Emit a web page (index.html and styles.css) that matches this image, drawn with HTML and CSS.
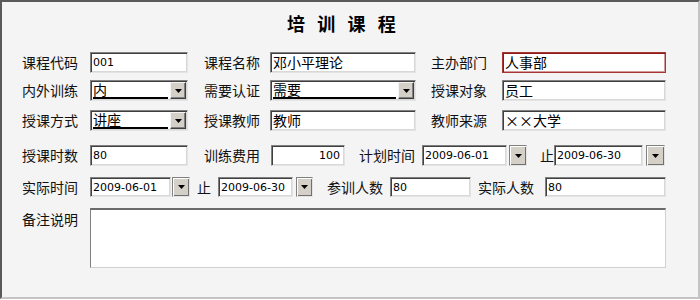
FILE: index.html
```html
<!DOCTYPE html>
<html lang="zh-CN">
<head>
<meta charset="utf-8">
<title>培训课程</title>
<link rel="stylesheet" href="styles.css">
</head>
<body>
<div class="frame">
  <div class="title">培 训 课 程</div>

  <div class="row r1">
    <span class="lbl w68">课程代码</span>
    <div class="field w98"><span class="num">001</span></div>
    <span class="lbl ml16 w66">课程名称</span>
    <div class="field w146"><span class="cjk">邓小平理论</span></div>
    <span class="lbl ml15 w71">主办部门</span>
    <div class="field red w164"><span class="cjk">人事部</span></div>
  </div>

  <div class="row r2">
    <span class="lbl w68">内外训练</span>
    <div class="field select w98"><span class="sel-text">内</span><span class="drop"><svg width="7" height="4" viewBox="0 0 7 4"><polygon points="0,0 7,0 3.5,4" fill="#000"/></svg></span></div>
    <span class="lbl ml16 w66">需要认证</span>
    <div class="field select w146"><span class="sel-text">需要</span><span class="drop"><svg width="7" height="4" viewBox="0 0 7 4"><polygon points="0,0 7,0 3.5,4" fill="#000"/></svg></span></div>
    <span class="lbl ml15 w71">授课对象</span>
    <div class="field w164"><span class="cjk">员工</span></div>
  </div>

  <div class="row r3">
    <span class="lbl w68">授课方式</span>
    <div class="field select w98"><span class="sel-text">讲座</span><span class="drop"><svg width="7" height="4" viewBox="0 0 7 4"><polygon points="0,0 7,0 3.5,4" fill="#000"/></svg></span></div>
    <span class="lbl ml16 w66">授课教师</span>
    <div class="field w146"><span class="cjk">教师</span></div>
    <span class="lbl ml15 w71">教师来源</span>
    <div class="field w164"><span class="cjk">××大学</span></div>
  </div>

  <div class="row r4">
    <span class="lbl w68">授课时数</span>
    <div class="field w98"><span class="num">80</span></div>
    <span class="lbl ml16 w67">训练费用</span>
    <div class="field right w74"><span class="num">100</span></div>
    <span class="lbl ml14 w63">计划时间</span>
    <div class="field w85"><span class="num">2009-06-01</span></div>
    <span class="dbtn ml2 w18"><svg width="7" height="4" viewBox="0 0 7 4"><polygon points="0,0 7,0 3.5,4" fill="#000"/></svg></span>
    <span class="lbl ml13 w14">止</span>
    <div class="field w89"><span class="num">2009-06-30</span></div>
    <span class="dbtn ml3 w19"><svg width="7" height="4" viewBox="0 0 7 4"><polygon points="0,0 7,0 3.5,4" fill="#000"/></svg></span>
  </div>

  <div class="row r5">
    <span class="lbl w68">实际时间</span>
    <div class="field w81"><span class="num">2009-06-01</span></div>
    <span class="dbtn ml1 w18"><svg width="7" height="4" viewBox="0 0 7 4"><polygon points="0,0 7,0 3.5,4" fill="#000"/></svg></span>
    <span class="lbl ml7 w21">止</span>
    <div class="field w75"><span class="num">2009-06-30</span></div>
    <span class="dbtn ml3 w17"><svg width="7" height="4" viewBox="0 0 7 4"><polygon points="0,0 7,0 3.5,4" fill="#000"/></svg></span>
    <span class="lbl ml14 w63">参训人数</span>
    <div class="field w81"><span class="num">80</span></div>
    <span class="lbl ml7 w67">实际人数</span>
    <div class="field w121"><span class="num">80</span></div>
  </div>

  <div class="row r6">
    <span class="lbl w68 top">备注说明</span>
    <div class="field memo"></div>
  </div>
</div>
</body>
</html>
```

FILE: styles.css
```css
html, body {
  margin: 0;
  padding: 0;
  background: #ffffff;
}
.frame {
  box-sizing: border-box;
  width: 700px;
  height: 299px;
  background: #f4f4f4;
  border-top: 2px solid #5a5a5a;
  border-left: 2px solid #5a5a5a;
  border-right: 2px solid #c4c4c4;
  border-bottom: 2px solid #c4c4c4;
  padding: 11px 0 0 20px;
  font-family: "Noto Sans CJK SC", sans-serif;
  color: #111;
}
.title {
  height: 24px;
  line-height: 24px;
  padding-left: 265px;
  font-family: "DejaVu Sans", "Noto Sans CJK SC", sans-serif;
  font-size: 18px;
  font-weight: bold;
  word-spacing: 6px;
  color: #000;
}
.row {
  display: flex;
  align-items: center;
  height: 21px;
}
.r1 { margin-top: 15px; }
.r2 { margin-top: 7px; }
.r3 { margin-top: 9px; }
.r4 { margin-top: 14px; }
.r5 { margin-top: 11px; height: 20px; }
.r6 { margin-top: 11px; height: 60px; align-items: flex-start; }

.lbl {
  flex: none;
  font-size: 14px;
  line-height: 21px;
  white-space: nowrap;
}
.lbl.top { line-height: 20px; margin-top: 1px; }

.field {
  box-sizing: border-box;
  flex: none;
  height: 100%;
  background: #fff;
  border: 1px solid;
  border-color: #808080 #e4e4e4 #e4e4e4 #808080;
  box-shadow: inset 1px 1px 0 #404040, inset -1px -1px 0 #d8d8d8;
  display: flex;
  align-items: center;
  padding: 0 2px 0 2px;
  overflow: hidden;
}
.field.red {
  border-color: #a83434;
  box-shadow: inset 1px 1px 0 #8a1c1c, inset -1px -1px 0 #d49a9a;
}
.field.right { justify-content: flex-end; padding-right: 4px; }
.num {
  font-family: "DejaVu Sans", sans-serif;
  font-size: 11px;
  color: #000;
  white-space: nowrap;
}
.cjk {
  font-family: "Noto Sans CJK SC", sans-serif;
  font-size: 14px;
  line-height: 17px;
  color: #000;
  white-space: nowrap;
}
.select {
  padding: 1px 1px 1px 2px;
  align-items: stretch;
}
.sel-text {
  flex: 1;
  font-size: 14px;
  line-height: 15px;
  color: #000;
  border-bottom: 2px solid #000;
  margin-right: 2px;
  white-space: nowrap;
}
.drop, .dbtn {
  box-sizing: border-box;
  flex: none;
  display: flex;
  align-items: center;
  justify-content: center;
  background: #d4d0c8;
}
.drop {
  width: 16px;
  border: 1px solid;
  border-color: #f4f4f4 #404040 #404040 #f4f4f4;
  box-shadow: inset -1px -1px 0 #808080;
}
.dbtn {
  height: 100%;
  border: 1px solid;
  border-color: #808080 #e4e4e4 #e4e4e4 #808080;
  box-shadow: inset 1px 1px 0 #ffffff, inset -1px -1px 0 #707070;
}
.memo {
  width: 576px;
  height: 60px;
  border-top: 2px solid #6a6a6a;
  border-left: 1px solid #808080;
  border-right: 1px solid #d0d0d0;
  border-bottom: 1px solid #d0d0d0;
  box-shadow: none;
}

.w14 { width: 14px; }
.w17 { width: 17px; }
.w18 { width: 18px; }
.w19 { width: 19px; }
.w21 { width: 21px; }
.w63 { width: 63px; }
.w66 { width: 66px; }
.w67 { width: 67px; }
.w68 { width: 68px; }
.w71 { width: 71px; }
.w74 { width: 74px; }
.w75 { width: 75px; }
.w81 { width: 81px; }
.w85 { width: 85px; }
.w89 { width: 89px; }
.w98 { width: 98px; }
.w121 { width: 121px; }
.w146 { width: 146px; }
.w164 { width: 164px; }
.ml1 { margin-left: 1px; }
.ml2 { margin-left: 2px; }
.ml3 { margin-left: 3px; }
.ml7 { margin-left: 7px; }
.ml13 { margin-left: 13px; }
.ml14 { margin-left: 14px; }
.ml15 { margin-left: 15px; }
.ml16 { margin-left: 16px; }
```
